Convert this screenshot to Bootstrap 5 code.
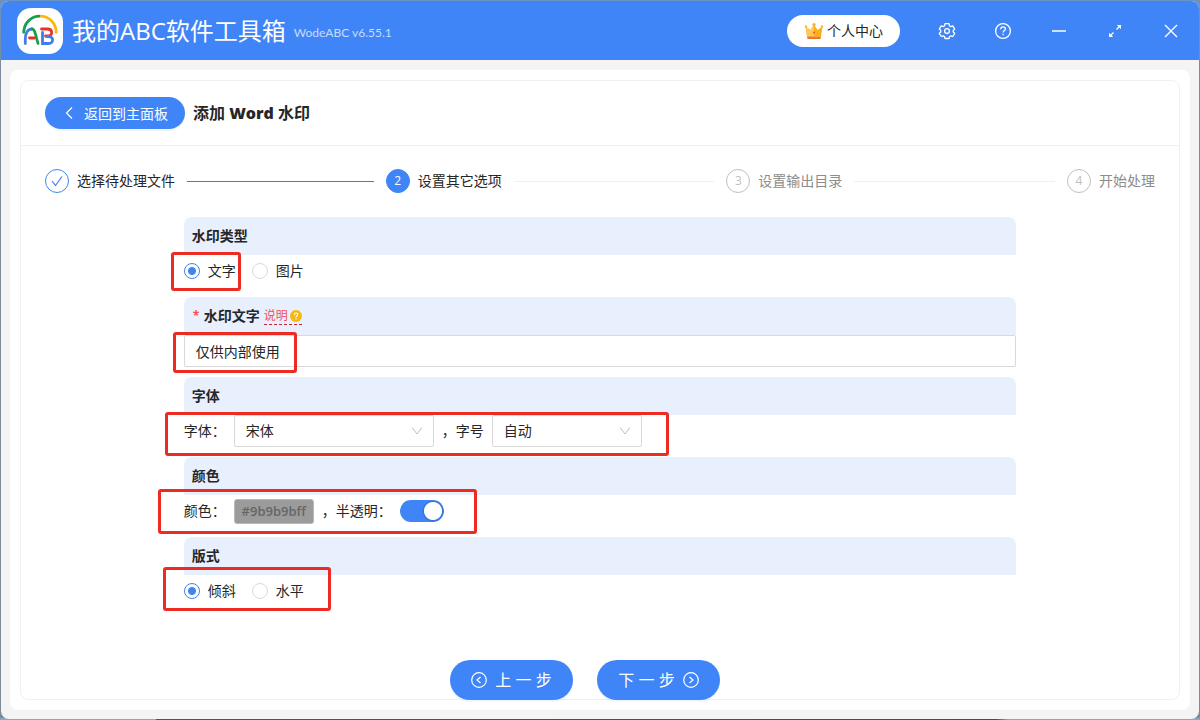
<!DOCTYPE html>
<html lang="zh-CN">
<head>
<meta charset="utf-8">
<meta name="viewport" content="width=device-width, initial-scale=1">
<title>我的ABC软件工具箱</title>
<link rel="stylesheet" href="https://cdn.jsdelivr.net/npm/bootstrap@5.3.0/dist/css/bootstrap.min.css">
<style>
:root { --brand: #3f85f7; --line: #f0f0f0; --edge: #d9d9d9; --ink: #262626; }
body { font-family: "Open Sans", "Noto Sans CJK SC", sans-serif; font-size: 14px; line-height: 22px; color: var(--ink); padding: 1px; background: linear-gradient(90deg, #8ba6bd 13%, #3a5a7a 13%, #33506e 83%, #8ba6bd 84%) bottom / 100% 2px no-repeat, linear-gradient(#6c92c0, #7d8b99 80px); }
.app-window { min-height: calc(100vh - 2px); background: #f4f4f4; border-radius: 8px; overflow: hidden; }
.title-bar { height: 59px; background: var(--brand); color: #fff; padding-left: 16px; }
.app-name { font-size: 24px; line-height: 32px; margin-left: 9px; font-weight: 400; }
.app-version { font-family: Lato, sans-serif; font-size: 12px; line-height: 16px; margin-left: 8px; opacity: .7; padding-top: 5px; }
.member-btn { height: 32px; background: #fff; color: var(--ink); border-radius: 16px; padding: 0 16px; margin-right: 19px; gap: 3px; font-size: 14px; }
.member-btn:hover { background: #f4f4f4; }
.tool-btn { width: 56px; height: 59px; border: 0; background: none; color: #fff; padding: 0; display: flex; align-items: center; justify-content: center; }
.panel { background: #fff; border-radius: 8px; margin: 10px 9px 9px; padding: 10px; }
.work-area { border: 1px solid var(--line); border-radius: 8px; }
.work-head { height: 65px; padding: 0 24px; gap: 8px; border-bottom: 1px solid var(--line); }
.work-head h1 { font-size: 16px; line-height: 24px; font-weight: 600; }
.back-btn, .step-btn { background: var(--brand); color: #fff; box-shadow: 0 2px 0 rgba(63,133,247,.08); }
.back-btn:hover, .step-btn:hover { background: #2f73e0; color: #fff; }
.back-btn { height: 32px; width: 140px; border-radius: 16px; font-size: 14px; gap: 8px; padding: 0; }
.step-btn { height: 40px; width: 123px; border-radius: 20px; font-size: 16px; gap: 8px; padding: 0; }
.work-body { padding: 23px 24px 0; }
.steps li { gap: 8px; flex: 1 1 0; }
.steps li:last-child { flex: none; }
.steps li:not(:last-child)::after { content: ""; flex: 1; height: 1px; background: var(--line); margin: 0 12px 0 4px; }
.steps .finished::after { background: #4380b8 !important; }
.step-dot { width: 24px; height: 24px; border: 1px solid #bfbfbf; border-radius: 50%; color: #bfbfbf; font-size: 12px; }
.finished .step-dot { border-color: var(--brand); color: var(--brand); }
.current .step-dot { border-color: var(--brand); background: var(--brand); color: #fff; }
.waiting { color: #8c8c8c; }
.options { margin-top: 24px; }
.field { border: 0; margin-bottom: 10px; }
.field-head { background: #e8effd; border-radius: 8px 8px 0 0; height: 38px; padding: 0 8px; font-size: 14px; font-weight: 600; display: flex; align-items: center; float: none; margin: 0; line-height: 22px; }
.field-row { height: 32px; gap: 8px; position: relative; }
.required-mark { color: #ff4d4f; width: 12px; font-size: 12px; font-weight: 700; padding-left: 1px; }
.help-link { color: #ef5350; font-size: 12px; line-height: 16px; font-weight: 400; border-bottom: 1px dashed #c62828; gap: 2px; margin-left: 4px; }
.field-row .form-control, .field-row .form-select { height: 32px; border: 1px solid var(--edge); border-radius: 2px; padding: 0 11px; font-size: 14px; line-height: 22px; color: var(--ink); }
.field-row .form-select { background-image: url("data:image/svg+xml,%3Csvg xmlns='http://www.w3.org/2000/svg' viewBox='0 0 12 12' fill='none' stroke='%23bfbfbf'%3E%3Cpath d='M1 2.500l5 6.500 5-6.500'/%3E%3C/svg%3E"); background-size: 12px 12px; background-position: right 10px center; }
.font-select { width: 200px; }
.size-select { width: 150px; }
.choice { gap: 8px; margin-right: 8px; }
.choice .form-check-input { width: 16px; height: 16px; margin: 0; border: 1px solid var(--edge); background-color: #fff; }
.choice .form-check-input:checked { border-color: var(--brand); background-image: radial-gradient(circle, var(--brand) 0 3.500px, transparent 4.500px); }
.color-btn { width: 80px; height: 25px; padding: 0; background: #9b9b9b; border: 1px solid #b8b8b8; border-radius: 3px; color: #666; font-size: 13px; line-height: 22px; font-weight: 600; }
.form-switch .toggle { width: 44px; height: 22px; margin: 0; border: 0; border-radius: 11px; background: #bfbfbf radial-gradient(circle at 11px 11px, #fff 8.500px, transparent 9.500px); }
.form-switch .toggle:checked { background: var(--brand) radial-gradient(circle at 33px 11px, #fff 8.500px, rgba(20,60,130,.25) 9.500px, transparent 11px); }
.mark-frame { position: absolute; border: 3px solid #ec2b22; border-radius: 3px; pointer-events: none; }
.frame-type { left: -13px; top: -3px; width: 70px; height: 39px; }
.frame-text { left: -11px; top: -3px; width: 124px; height: 41px; z-index: 1; }
.frame-font { left: -19px; top: -3px; width: 504px; height: 44px; }
.frame-color { left: -26px; top: -6px; width: 319px; height: 45px; }
.frame-style { left: -21px; top: -8px; width: 168px; height: 44px; }
.actions { gap: 24px; padding-right: 30px; margin-bottom: -1px; }
</style>
</head>
<body>
<div class="app-window d-flex flex-column">
  <header class="title-bar d-flex align-items-center">
    <svg width="46" height="46" viewBox="0 0 46 46" fill="none" stroke-width="2.800" aria-hidden="true">
      <rect width="46" height="46" rx="14" fill="#fff"/>
      <path d="M6.800 25.500C6.300 15 14 8.200 23 8.200" stroke="#16a04a"/>
      <path d="M23 8.200c9 0 16.700 6.800 16.200 17.300" stroke="#fbb713"/>
      <path d="M8.300 35.500v-4c0-6 2.200-10.500 6.700-10.500" stroke="#3f7ee8" stroke-linecap="round"/>
      <path d="M15 21c2.600 0 3.200 4 4 7l2 7.500" stroke="#16a04a" stroke-linecap="round"/>
      <path d="M12.500 30h5" stroke="#e63329" stroke-linecap="round"/>
      <path d="M24.500 21h6c5.500 0 5.500 7 .5 7h-2.500" stroke="#e63329" stroke-linecap="round"/>
      <path d="M25.500 24.500v11h6c5.500 0 5.500-7 0-7h-2" stroke="#3f7ee8" stroke-linecap="round"/>
    </svg>
    <span class="app-name">我的ABC软件工具箱</span>
    <span class="app-version">WodeABC v6.55.1</span>
    <div class="d-flex align-items-center ms-auto">
      <button type="button" class="btn member-btn d-flex align-items-center">
        <svg width="20" height="20" viewBox="0 0 20 20" aria-hidden="true">
          <path d="M1.500 5.500l5 3.500L10 3.500l3.500 5.500 5-3.500-1.500 10H3z" fill="#fbb01a"/>
          <path d="M1.500 5.500l5 3.500L10 3.500v12H3z" fill="#fbc95d"/>
          <circle cx="10" cy="3.600" r="1.700" fill="#f8b62b"/><circle cx="2" cy="5.500" r="1.200" fill="#f8b62b"/><circle cx="18" cy="5.500" r="1.200" fill="#f8b62b"/>
          <path d="M3 15.500h14l-.5 2.500h-13z" fill="#f2761b"/><circle cx="10" cy="11.500" r="1" fill="#e2551b"/>
        </svg>
        个人中心
      </button>
      <button type="button" class="tool-btn" aria-label="设置">
        <svg width="18" height="18" viewBox="0 0 18 18" fill="none" stroke="currentColor" stroke-width="1.300" stroke-linejoin="round"><path d="M7 1.700h4l.5 2.100 1.300.8 2-.7 1.900 3.200-1.500 1.400v1.400l1.500 1.400-1.900 3.200-2-.7-1.300.8-.5 1.900H7l-.5-1.900-1.300-.8-2 .7-1.900-3.200 1.500-1.400V8.500L1.300 7.100l1.900-3.200 2 .7 1.300-.8z"/><circle cx="9" cy="9.100" r="2.400"/></svg>
      </button>
      <button type="button" class="tool-btn" aria-label="帮助">
        <svg width="18" height="18" viewBox="0 0 18 18" fill="none" stroke="currentColor" stroke-width="1.300"><circle cx="9" cy="9" r="7.400"/><path d="M6.700 7.300c0-3.200 4.700-3 4.700-.2 0 1.700-2.300 1.700-2.300 3.400"/><path d="M9.100 11.800v1.400"/></svg>
      </button>
      <button type="button" class="tool-btn" aria-label="最小化">
        <svg width="16" height="16" viewBox="0 0 16 16" fill="none" stroke="currentColor" stroke-width="1.500"><path d="M1 8h14"/></svg>
      </button>
      <button type="button" class="tool-btn" aria-label="最大化">
        <svg width="16" height="16" viewBox="0 0 16 16" fill="none" stroke="currentColor" stroke-width="1.300"><path d="M9.500 6.500L13 3M6.500 9.500L3 13"/><path d="M9.800 2h4.200v4.200zM2 9.800v4.200h4.200z" fill="currentColor" stroke="none"/></svg>
      </button>
      <button type="button" class="tool-btn" aria-label="关闭">
        <svg width="16" height="16" viewBox="0 0 16 16" fill="none" stroke="currentColor" stroke-width="1.400"><path d="M2 2l12 12M14 2L2 14"/></svg>
      </button>
    </div>
  </header>

  <main class="panel d-flex flex-column flex-grow-1">
    <div class="work-area d-flex flex-column flex-grow-1">
      <div class="work-head d-flex align-items-center">
        <button type="button" class="btn back-btn d-flex align-items-center justify-content-center">
          <svg width="14" height="14" viewBox="0 0 14 14" fill="none" stroke="currentColor" stroke-width="1.200" aria-hidden="true"><path d="M10 1.500L4.500 7l5.500 5.500"/></svg>
          返回到主面板
        </button>
        <h1 class="m-0">添加 <b>Word</b> 水印</h1>
      </div>

      <div class="work-body d-flex flex-column flex-grow-1">
        <ol class="steps list-unstyled d-flex m-0">
          <li class="finished d-flex align-items-center">
            <span class="step-dot d-flex align-items-center justify-content-center"><svg width="12" height="12" viewBox="0 0 12 12" fill="none" stroke="currentColor" stroke-width="1.200"><path d="M1 6l3.500 4.500L11 1.500"/></svg></span>选择待处理文件
          </li>
          <li class="current d-flex align-items-center" aria-current="step"><span class="step-dot d-flex align-items-center justify-content-center">2</span>设置其它选项</li>
          <li class="waiting d-flex align-items-center"><span class="step-dot d-flex align-items-center justify-content-center">3</span>设置输出目录</li>
          <li class="waiting d-flex align-items-center"><span class="step-dot d-flex align-items-center justify-content-center">4</span>开始处理</li>
        </ol>

        <form class="options w-75 mx-auto">
          <fieldset class="field">
            <legend class="field-head">水印类型</legend>
            <div class="field-row d-flex align-items-center">
              <span class="choice d-flex align-items-center"><input class="form-check-input" type="radio" name="kind" id="kindText" checked><label for="kindText">文字</label></span>
              <span class="choice d-flex align-items-center"><input class="form-check-input" type="radio" name="kind" id="kindImage"><label for="kindImage">图片</label></span>
              <span class="mark-frame frame-type"></span>
            </div>
          </fieldset>

          <div class="field">
            <div class="field-head"><span class="required-mark">*</span><label for="markText">水印文字</label>
              <a href="#" class="help-link d-flex align-items-center text-decoration-none">说明<svg width="12" height="12" viewBox="0 0 12 12" aria-hidden="true"><circle cx="6" cy="6" r="6" fill="#f5b90f"/><path d="M4.300 4.700c0-2.400 3.500-2.200 3.500-.2C7.800 5.800 6 5.700 6 7.200M6 8.200v1.200" fill="none" stroke="#fff" stroke-width="1.100"/></svg></a>
            </div>
            <div class="field-row">
              <input type="text" class="form-control" id="markText" value="仅供内部使用">
              <span class="mark-frame frame-text"></span>
            </div>
          </div>

          <fieldset class="field">
            <legend class="field-head">字体</legend>
            <div class="field-row d-flex align-items-center">
              <label for="fontName">字体：</label>
              <select class="form-select font-select" id="fontName"><option>宋体</option><option>黑体</option></select>
              <label for="fontSize">，字号</label>
              <select class="form-select size-select" id="fontSize"><option>自动</option></select>
              <span class="mark-frame frame-font"></span>
            </div>
          </fieldset>

          <fieldset class="field">
            <legend class="field-head">颜色</legend>
            <div class="field-row d-flex align-items-center">
              <label for="markColor">颜色：</label>
              <button type="button" class="color-btn" id="markColor">#9b9b9bff</button>
              <label for="translucent">，半透明：</label>
              <span class="form-switch p-0 d-flex"><input class="form-check-input toggle" type="checkbox" role="switch" id="translucent" checked></span>
              <span class="mark-frame frame-color"></span>
            </div>
          </fieldset>

          <fieldset class="field">
            <legend class="field-head">版式</legend>
            <div class="field-row d-flex align-items-center">
              <span class="choice d-flex align-items-center"><input class="form-check-input" type="radio" name="layout" id="slanted" checked><label for="slanted">倾斜</label></span>
              <span class="choice d-flex align-items-center"><input class="form-check-input" type="radio" name="layout" id="level"><label for="level">水平</label></span>
              <span class="mark-frame frame-style"></span>
            </div>
          </fieldset>
        </form>

        <div class="actions d-flex justify-content-center mt-auto">
          <button type="button" class="btn step-btn d-flex align-items-center justify-content-center">
            <svg width="16" height="16" viewBox="0 0 16 16" fill="none" stroke="currentColor" stroke-width="1.200" aria-hidden="true"><circle cx="8" cy="8" r="7.300"/><path d="M9.500 5L6 8l3.500 3"/></svg>
            上 一 步
          </button>
          <button type="button" class="btn step-btn d-flex align-items-center justify-content-center">
            下 一 步
            <svg width="16" height="16" viewBox="0 0 16 16" fill="none" stroke="currentColor" stroke-width="1.200" aria-hidden="true"><circle cx="8" cy="8" r="7.300"/><path d="M6.500 5L10 8l-3.500 3"/></svg>
          </button>
        </div>
      </div>
    </div>
  </main>
</div>
<script src="https://cdn.jsdelivr.net/npm/bootstrap@5.3.0/dist/js/bootstrap.bundle.min.js"></script>
</body>
</html>
